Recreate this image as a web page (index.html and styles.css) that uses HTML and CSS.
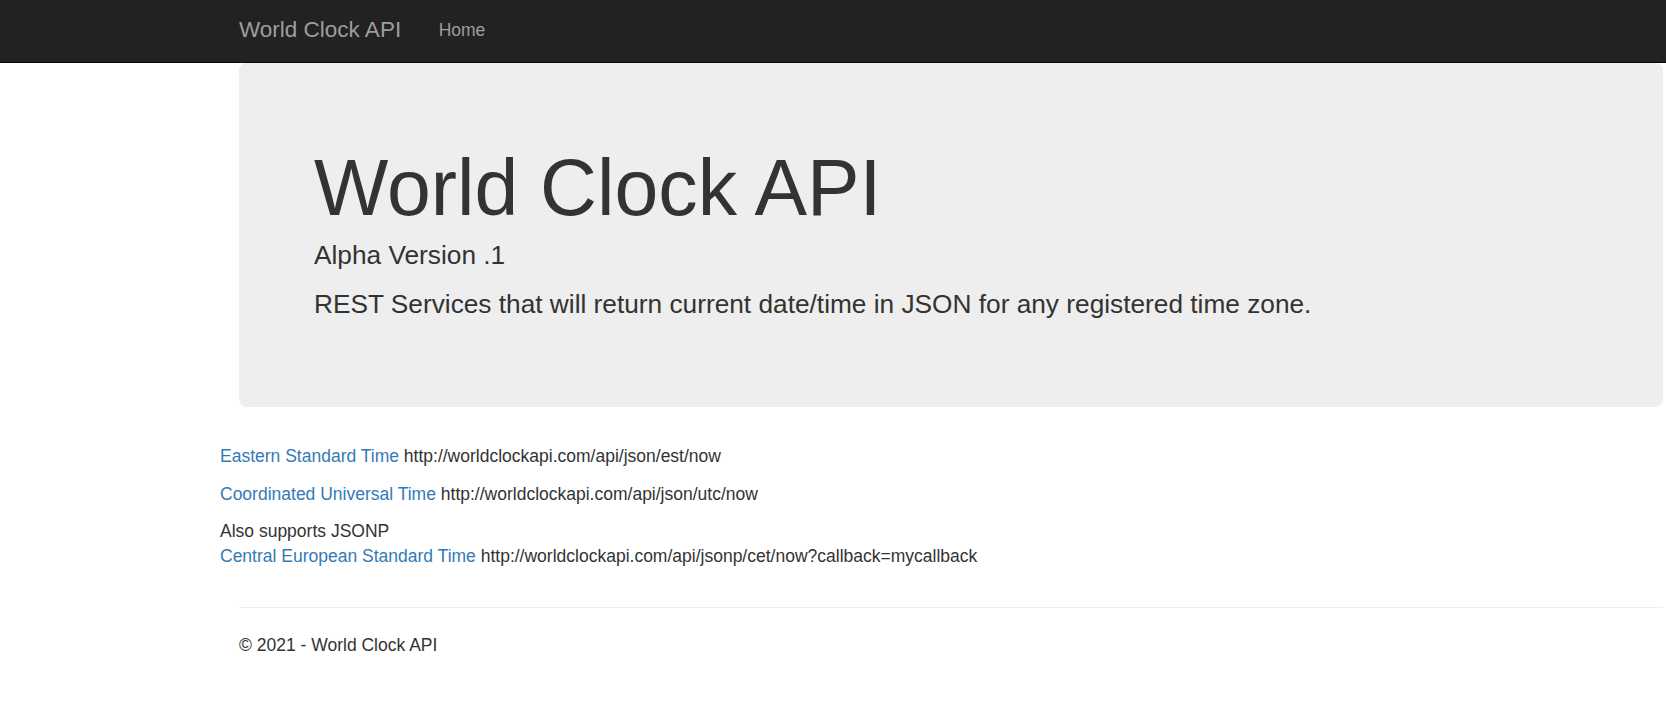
FILE: index.html
```html
<!DOCTYPE html>
<html lang="en">
<head>
<meta charset="utf-8">
<title>World Clock API</title>
<link rel="stylesheet" href="styles.css">
</head>
<body>
<header class="navbar">
  <a class="brand" href="#">World Clock API</a>
  <a class="nav-link" href="#">Home</a>
</header>
<main class="main">
  <section class="jumbotron">
    <h1 class="title">World Clock API</h1>
    <p class="lead">Alpha Version .1</p>
    <p class="lead lead-second">REST Services that will return current date/time in JSON for any registered time zone.</p>
  </section>
  <div class="links">
    <p class="item"><a href="#">Eastern Standard Time</a> http://worldclockapi.com/api/json/est/now</p>
    <p class="item"><a href="#">Coordinated Universal Time</a> http://worldclockapi.com/api/json/utc/now</p>
    <p class="item">Also supports JSONP<br><a href="#">Central European Standard Time</a> http://worldclockapi.com/api/jsonp/cet/now?callback=mycallback</p>
  </div>
  <footer class="footer">
    <hr class="rule">
    <p class="copy">&copy; 2021 - World Clock API</p>
  </footer>
</main>
</body>
</html>
```

FILE: styles.css
```css
html, body {
  margin: 0;
  padding: 0;
  background: #fff;
}

body {
  font-family: "Liberation Sans", Arial, Helvetica, sans-serif;
  font-size: 17.5px;
  line-height: 25px;
  color: #333;
}

a {
  color: #337ab7;
  text-decoration: none;
}

.navbar {
  display: flex;
  align-items: flex-start;
  height: 62px;
  background: #222;
  border-bottom: 1px solid #080808;
  padding-left: 239px;
  box-sizing: content-box;
}

.brand {
  color: #9d9d9d;
  font-size: 22.5px;
  line-height: 25px;
  padding-top: 17px;
  padding-right: 19px;
}

.nav-link {
  color: #9d9d9d;
  font-size: 17.5px;
  line-height: 25px;
  padding-top: 17.5px;
  padding-left: 18.5px;
}

.main {
  padding: 0 3px 0 220px;
}

.jumbotron {
  margin-left: 19px;
  background: #eee;
  border-radius: 7.5px;
  padding: 82px 76px 84px 75px;
  margin-bottom: 37.5px;
}

.title {
  margin: 0;
  font-size: 78.75px;
  line-height: 86px;
  font-weight: normal;
  color: #333;
}

.lead {
  margin: 5.5px 0 0 0;
  font-size: 26.25px;
  line-height: 37px;
}

.lead-second {
  margin-top: 12px;
}

.links {
  display: flex;
  flex-direction: column;
}

.item {
  margin: 0 0 12.5px 0;
}

.footer {
  margin-left: 19px;
}

.rule {
  margin: 25px 0 25px 0;
  border: 0;
  border-top: 1px solid #eee;
  height: 0;
}

.copy {
  margin: 0;
}
```
